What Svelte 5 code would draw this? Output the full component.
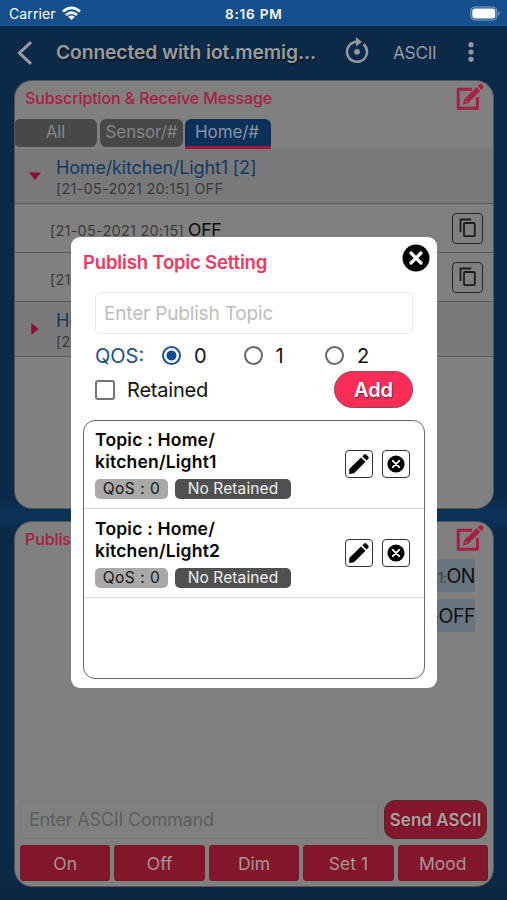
<script>
  const tabs = ['All', 'Sensor/#', 'Home/#'];
  const commands = ['On', 'Off', 'Dim', 'Set 1', 'Mood'];
  const topics = ['Light1', 'Light2'];
  const levels = [0, 1, 2];
  let qos = $state(0);
  let active = $state('Home/#');
</script>

{#snippet compose()}
  <svg class="compose" width="29" height="28" viewBox="0 0 29 28">
    <path d="M16 6.2H2.2V25.2H21.4V14" fill="none" stroke="currentColor" stroke-width="3" stroke-linejoin="round" />
    <path d="M8 16.5 20.5 4.2 24.2 8 11.7 20.2 7.2 21.6Z" fill="currentColor" />
    <path d="M21.6 3.2 23.6 1.2Q24.6.4 25.6 1.4L27.2 3Q28 4 27.2 5L25.2 7Z" fill="currentColor" />
    <circle cx="9.8" cy="18.6" r="1" fill="#808080" />
  </svg>
{/snippet}

{#snippet copy()}
  <span class="copy">
    <svg width="18" height="20" viewBox="0 0 18 20" fill="none" stroke="#1c1c1c" stroke-width="1.8">
      <path d="M1.5 14V1.5H12.2" />
      <rect x="5" y="5" width="10.8" height="13.2" rx="1" />
    </svg>
  </span>
{/snippet}

<div class="screen">
  <div class="status">
    <span class="carrier">Carrier</span>
    <svg class="wifi" width="19" height="15" viewBox="0 0 19 15" fill="none" stroke="#fff" stroke-width="2.8">
      <path d="M1 5.500Q9.500-1.700 18 5.500" />
      <path d="M4 9Q9.500 4.300 15 9" />
      <path d="M9.500 14 6.200 10.800Q9.500 8.200 12.800 10.800Z" fill="#fff" stroke="none" />
    </svg>
    <span class="time">8:16 PM</span>
    <svg class="battery" width="31" height="15" viewBox="0 0 31 15">
      <rect x=".8" y="1" width="26" height="13" rx="4" fill="none" stroke="#83a4c6" stroke-width="1" />
      <rect x="2.300" y="2.500" width="23" height="10" rx="2.700" fill="#fff" />
      <path d="M28.300 5Q31 7.500 28.300 10Z" fill="#83a4c6" />
    </svg>
  </div>

  <header class="nav">
    <svg class="back" width="16" height="24" viewBox="0 0 16 24"><path d="M14 1.200 2.500 12 14 22.800" fill="none" stroke="#999b9d" stroke-width="3" /></svg>
    <span class="title">Connected with iot.memig...</span>
    <svg class="refresh" width="24" height="28" viewBox="0 0 24 28">
      <path d="M18.500 7.200A10 10 0 1 1 12 4.800H14" fill="none" stroke="#96999c" stroke-width="2.500" />
      <path d="M11 0 17 5 11 9.500Z" fill="#96999c" />
      <circle cx="12" cy="14.800" r="2.900" fill="#96999c" />
    </svg>
    <span class="mode">ASCII</span>
    <svg class="dots" width="6" height="20" viewBox="0 0 6 20" fill="#96999c"><circle cx="3" cy="2.700" r="2.600" /><circle cx="3" cy="10" r="2.600" /><circle cx="3" cy="17.300" r="2.600" /></svg>
  </header>

  <section class="panel subs">
    <div class="head"><span>Subscription &amp; Receive Message</span>{@render compose()}</div>
    <div class="tabs">
      {#each tabs as t}
        <button class:active={t === active} onclick={() => (active = t)}>{t}</button>
      {/each}
    </div>
    <div class="group">
      <svg class="arrow" width="12" height="12" viewBox="0 0 12 12"><path d="M0 2.500H12L6 10Z" fill="#8f0d36" /></svg>
      <div><div class="topic">Home/kitchen/Light1 [2]</div><div class="stamp">[21-05-2021 20:15] OFF</div></div>
    </div>
    {#each [1, 2] as n}
      <div class="msg"><span class="stamp">[21-05-2021 20:15]</span><span class="val">OFF</span>{@render copy()}</div>
    {/each}
    <div class="group">
      <svg class="arrow" width="12" height="12" viewBox="0 0 12 12"><path d="M2.300 0V12L9.500 6Z" fill="#8f0d36" /></svg>
      <div><div class="topic">Home/kitchen/Light2 [1]</div><div class="stamp">[21-05-2021 20:15] OFF</div></div>
    </div>
  </section>

  <section class="panel pub">
    <div class="head"><span>Publish</span>{@render compose()}</div>
    <div class="bubbles">
      <div class="bubble"><small>Light1:</small>ON</div>
      <div class="bubble"><small>Light1:</small>OFF</div>
    </div>
    <div class="send">
      <div class="field">Enter ASCII Command</div>
      <button>Send ASCII</button>
    </div>
    <div class="cmds">
      {#each commands as c}<button>{c}</button>{/each}
    </div>
  </section>

  <div class="modal">
    <div class="mhead">
      <h2>Publish Topic Setting</h2>
      <svg width="28" height="28" viewBox="0 0 28 28"><circle cx="14" cy="14" r="13.500" fill="#000" /><path d="m9 9 10 10M19 9 9 19" stroke="#fff" stroke-width="3.200" stroke-linecap="round" /></svg>
    </div>
    <div class="minput">Enter Publish Topic</div>
    <div class="qos">
      <span class="label">QOS:</span>
      {#each levels as l}
        <button class="radio" onclick={() => (qos = l)}>
          <span class="ring" class:on={qos === l}></span><span>{l}</span>
        </button>
      {/each}
    </div>
    <div class="retain">
      <span class="check"></span><span class="rtext">Retained</span>
      <button class="add">Add</button>
    </div>
    <div class="list">
      {#each topics as t}
        <div class="item">
          <div class="info">
            <div class="name">Topic : Home/<br />kitchen/{t}</div>
            <div class="tags"><span class="q">QoS : 0</span><span class="r">No Retained</span></div>
          </div>
          <span class="act">
            <svg width="22" height="22" viewBox="0 0 22 22"><path d="M1.300 16 13 4.500 17.500 8.800 6 20.300 1.200 21Z" /><path d="M14.200 3.300 16.300 1.400Q17.400.6 18.500 1.700L20.200 3.400Q21.300 4.500 20.400 5.600L18.600 7.600Z" /></svg>
          </span>
          <span class="act">
            <svg width="18" height="18" viewBox="0 0 18 18"><circle cx="9" cy="9" r="8.600" /><path d="m5.800 5.800 6.400 6.400m0-6.400-6.400 6.400" stroke="#fff" stroke-width="1.800" stroke-linecap="round" /></svg>
          </span>
        </div>
      {/each}
    </div>
  </div>
</div>

<style>
  :global(body) { background: #0b2a49; overflow: hidden; }
  * { box-sizing: border-box; }
  svg { flex: none; display: block; }
  button { font: inherit; border: 0; padding: 0; margin: 0; background: none; color: inherit; letter-spacing: inherit; }
  .screen {
    position: relative; width: 507px; height: 900px; overflow: hidden; white-space: nowrap;
    font-family: Inter, "Liberation Sans", sans-serif; display: flex; flex-direction: column;
    background: linear-gradient(#0b2a49 0 500px, #0a3156 509px 521px, #0b2a49 530px 830px, #0b2744);
  }
  .status { height: 26px; flex: none; background: #15508d; color: #fff; display: flex; align-items: center; padding: 1px 6px 0 9px; }
  .carrier { font-size: 14px; width: 53px; letter-spacing: .1px; }
  .time { font-size: 13.500px; font-weight: 600; margin-left: 144px; width: 60px; letter-spacing: .8px; }
  .battery { margin-left: auto; }
  .nav { height: 54px; flex: none; display: flex; align-items: center; color: #999b9d; padding-left: 17px; }
  .title { font-size: 19.300px; font-weight: 600; width: 264px; margin: -2px 0 0 23px; letter-spacing: -.12px; text-shadow: 1px 2px 1px #101820; }
  .refresh { margin: -4px 0 0 25px; }
  .mode { font-size: 17.300px; width: 44px; margin: -1px 0 0 24px; letter-spacing: -.3px; }
  .dots { margin: -2px 0 0 31px; }
  .panel { width: 480px; margin-left: 14px; flex: none; background: #808080; border: 1px solid #555; border-radius: 18px; overflow: hidden; display: flex; flex-direction: column; }
  .subs { height: 429px; }
  .pub { height: 366px; margin-top: 12px; }
  .head { height: 38px; flex: none; display: flex; padding: 0 8px 0 10px; justify-content: space-between; color: #a91e42; font-size: 16px; font-weight: 500; line-height: 35px; letter-spacing: -.1px; }
  .compose { margin-top: 2px; }
  .tabs { display: flex; gap: 3px; height: 30px; flex: none; margin-left: -1px; }
  .tabs button { width: 83px; height: 28px; background: #484848; color: #858585; font-size: 17px; line-height: 26px; padding-bottom: 2px; border-radius: 6px; letter-spacing: -.1px; }
  .tabs button.active { height: 30px; width: 86px; margin-left: -1px; background: #0c305a; border-bottom: 3px solid #a31637; border-radius: 6px 6px 0 0; color: #8995a2; padding: 0 2px 1px 0; }
  .group { height: 55px; flex: none; background: #79797b; border-bottom: 1px solid #5b5b5b; display: flex; padding: 8px 0 0 14px; gap: 15px; }
  .arrow { margin-top: 13px; }
  .topic { color: #123961; font-size: 18px; line-height: 21px; letter-spacing: -.16px; }
  .stamp { color: #3b3b3b; font-size: 14.500px; line-height: 21px; letter-spacing: .23px; }
  .msg { height: 49px; flex: none; border-bottom: 1px solid #5b5b5b; display: flex; align-items: center; padding: 4px 10px 0 35px; }
  .val { color: #080808; font-size: 17.500px; margin: -1px 0 0 4px; letter-spacing: -.2px; }
  .copy { width: 31px; height: 31px; border: 1.500px solid #282828; border-radius: 4px; margin: -4px 0 0 auto; display: flex; align-items: center; justify-content: center; }
  .bubbles { flex: 1; display: flex; flex-direction: column; align-items: flex-end; gap: 7px; padding-right: 18px; }
  .bubble { background: #68747f; color: #111; height: 33px; width: 150px; border-radius: 2px; font-size: 19.500px; line-height: 34px; text-align: right; letter-spacing: -.5px; }
  .bubble small { color: #3b4046; font-size: 14px; }
  .pub .head { height: 37px; }
  .send { display: flex; gap: 5px; height: 39px; margin: 0 6px 6px 5px; flex: none; }
  .field { width: 360px; border: 1px solid #797979; border-radius: 5px; color: #5e5e5e; font-size: 18px; line-height: 38px; padding-left: 8px; letter-spacing: -.2px; }
  .send button { width: 103px; background: #84162e; color: #a7a2a3; border: 1px solid #57272f; border-radius: 11px; font-size: 17px; font-weight: 600; text-shadow: 1px 1px 1px #64111f; }
  .cmds { display: flex; gap: 4px; margin: 0 5px 5px 5px; height: 36px; flex: none; }
  .cmds button { flex: 1; background: #84162c; border: 1px solid #721b2c; border-radius: 3px; color: #aa9498; font-size: 17.500px; }
  .modal { position: absolute; left: 71px; top: 237px; width: 366px; height: 451px; background: #fff; border-radius: 9px; padding: 7px 12px 9px; display: flex; flex-direction: column; }
  .mhead { height: 48px; display: flex; justify-content: space-between; margin-right: -5px; }
  h2 { margin: 0; color: #f13760; font-size: 18.500px; font-weight: 600; line-height: 37px; letter-spacing: -.17px; }
  .minput { height: 42px; margin: 0 12px; border: 1px solid #e9e9e9; border-radius: 5px; color: #bdbdbd; font-size: 19px; line-height: 42px; padding-left: 8px; letter-spacing: -.17px; }
  .qos { display: flex; height: 42px; align-items: center; margin-left: 12px; font-size: 20px; color: #111; }
  .label { color: #1b5088; width: 67px; }
  .label, .radio span:last-child { padding-top: 1px; }
  .radio { display: flex; align-items: center; gap: 13px; width: 81.500px; }
  .ring { width: 19px; height: 19px; border: 2px solid #666; border-radius: 50%; }
  .ring.on { border-color: #19559a; background: radial-gradient(circle, #104c93 0 4.700px, #fff 5.300px); }
  .retain { height: 37px; margin: -5px 12px 0; display: flex; align-items: center; color: #111; font-size: 20px; }
  .rtext { padding-top: 1px; letter-spacing: -.2px; }
  .check { width: 20px; height: 20px; border: 2px solid #747474; border-radius: 3px; margin-right: 12px; }
  .add { width: 79px; height: 37px; margin-left: auto; border-radius: 19px; background: #fc2e58; border: 1px solid #8b4a59; color: #fff; font-weight: 600; text-shadow: 1px 1px 1px #602737; }
  .list { height: 259px; margin-top: 12px; border: 1.500px solid #686868; border-radius: 12px; overflow: hidden; }
  .item { height: 89px; border-bottom: 1px solid #d7d7d7; padding: 8px 14px 0 11px; display: flex; gap: 9px; }
  .item:first-child { height: 88px; }
  .item:nth-child(2) { padding-top: 9px; }
  .info { flex: 1; }
  .name { font-size: 17.500px; font-weight: 600; line-height: 21.500px; color: #050505; letter-spacing: .2px; }
  .tags { display: flex; gap: 7px; margin-top: 7px; font-size: 15.500px; line-height: 20px; text-align: center; letter-spacing: .1px; }
  .q, .r { height: 20px; border-radius: 5px; }
  .q { width: 73px; background: #a9a9a9; color: #161616; letter-spacing: .5px; }
  .r { width: 116px; background: #505050; color: #f1f1f1; }
  .act { width: 28px; height: 28px; margin-top: 21px; border: 1.500px solid #333; border-radius: 4px; display: flex; align-items: center; justify-content: center; }
</style>
